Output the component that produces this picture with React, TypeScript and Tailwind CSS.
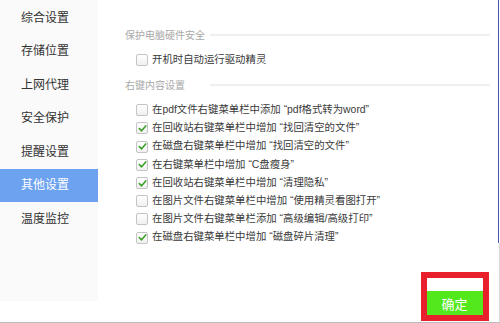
const menu = ['综合设置', '存储位置', '上网代理', '安全保护', '提醒设置', '其他设置', '温度监控'];

const rightMenu = [
    { label: '在pdf文件右键菜单栏中添加 “pdf格式转为word”', checked: false },
    { label: '在回收站右键菜单栏中增加 “找回清空的文件”', checked: true },
    { label: '在磁盘右键菜单栏中增加 “找回清空的文件”', checked: true },
    { label: '在右键菜单栏中增加 “C盘瘦身”', checked: true },
    { label: '在回收站右键菜单栏中增加 “清理隐私”', checked: true },
    { label: '在图片文件右键菜单栏中增加 “使用精灵看图打开”', checked: false },
    { label: '在图片文件右键菜单栏添加 “高级编辑/高级打印”', checked: false },
    { label: '在磁盘右键菜单栏中增加 “磁盘碎片清理”', checked: true },
];

const font = { fontFamily: '"Liberation Sans", "Noto Sans CJK SC", sans-serif' };

const CheckBox = ({ checked }: { checked: boolean }) => (
    <div className="w-[12px] h-[12px] rounded-[2px] border border-[#c4c4c4] bg-gradient-to-b from-white to-[#f0f0f0] flex items-center justify-center shrink-0">
        {checked && (
            <svg className="w-[9px] h-[9px]" viewBox="0 0 10 10" fill="none">
                <path d="M1.5 5.2 L4 7.6 L8.6 2.2" stroke="#3fa02c" strokeWidth={1.8} strokeLinecap="round" strokeLinejoin="round" />
            </svg>
        )}
    </div>
);

const Row = ({ label, checked }: { label: string; checked: boolean }) => (
    <div className="flex items-center h-[18.2px] pl-[38px] gap-[4px]">
        <CheckBox checked={checked} />
        <span className="text-[10.4px] leading-none text-[#3a3a3a] whitespace-pre">{label}</span>
    </div>
);

const SectionTitle = ({ title }: { title: string }) => (
    <div className="flex items-center h-[14px] pl-[27px] pr-[8px]">
        <span className="w-[85px] shrink-0 text-[10px] leading-none text-[#a8a8a8] whitespace-nowrap">{title}</span>
        <div className="flex-1 h-[2px] bg-[#f0f0f0] mb-[3px]" />
    </div>
);

export default function App() {
    return (
        <div className="w-[500px] h-[323px] bg-white flex flex-col overflow-hidden" style={font}>
            <div className="flex h-[322px]">
                {/* Sidebar */}
                <div className="w-[98px] h-[301px] bg-[#fafafa] pt-[1px] flex flex-col shrink-0">
                    {menu.map((m) => (
                        <div
                            key={m}
                            className={`h-[33.5px] flex items-center pl-[21px] text-[12px] leading-none ${
                                m === '其他设置' ? 'bg-[#6da2f1] text-white' : 'text-[#333]'
                            }`}
                        >
                            {m}
                        </div>
                    ))}
                </div>

                {/* Content */}
                <div className="flex-1 flex flex-col pt-[29px]">
                    <SectionTitle title="保护电脑硬件安全" />
                    <div className="mt-[8px]">
                        <Row label="开机时自动运行驱动精灵" checked={false} />
                    </div>
                    <div className="mt-[10px]">
                        <SectionTitle title="右键内容设置" />
                    </div>
                    <div className="mt-[8px] flex flex-col">
                        {rightMenu.map((r) => (
                            <Row key={r.label} label={r.label} checked={r.checked} />
                        ))}
                    </div>
                    <div className="flex-1" />
                    <div className="flex justify-end pr-[10px] mb-[5px]">
                        <div className="relative">
                            <button className="w-[67px] h-[26px] bg-[#52e81c] text-white text-[13px] leading-none flex items-center justify-center">
                                确定
                            </button>
                            {/* annotation box */}
                            <div className="absolute top-[-19px] left-0 w-[68px] h-[49px] border-[6px] border-[#e8202b]" />
                        </div>
                    </div>
                </div>

                {/* Right edge */}
                <div className="w-[2px] flex flex-col shrink-0">
                    <div className="h-[243px] w-[1px] bg-[#4252b0]" />
                    <div className="flex-1 w-[1px] ml-[1px] bg-[#d8d8d8]" />
                </div>
            </div>
            <div className="h-[1px] bg-[#bdbdbd]" />
        </div>
    );
}
